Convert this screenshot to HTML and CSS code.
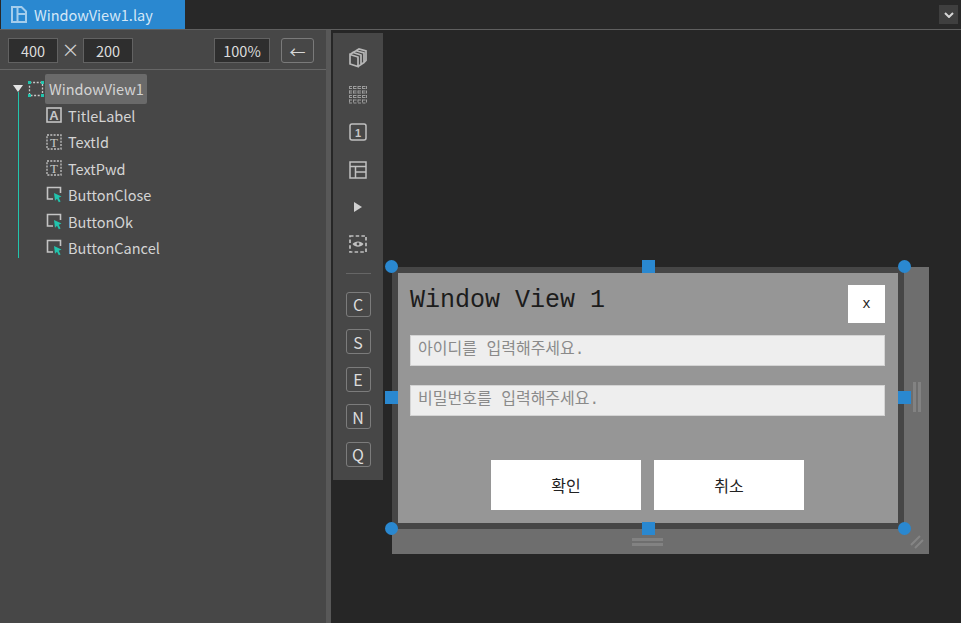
FILE: index.html
```html
<!DOCTYPE html>
<html lang="ko">
<head>
    <meta charset="UTF-8">
    <title>WindowView1.lay</title>
    <link rel="stylesheet" href="styles.css">
</head>
<body>

    <svg class="defs" width="0" height="0">
        <symbol id="icon-button" viewBox="0 0 16 17">
            <path d="M7 13H1.5V1.5H14.5V7" fill="none" stroke="#c4c4c4" stroke-width="1.6"/>
            <path d="M8 7L15.5 10.5L12.7 11.8L14.6 15.5L12.8 16.3L11 12.7L9 14.8Z" fill="#22c4ad"/>
        </symbol>
        <symbol id="icon-text" viewBox="0 0 16 16">
            <rect x="1" y="1" width="14" height="14" fill="none" stroke="#c4c4c4" stroke-width="1.3" stroke-dasharray="2 1.3"/>
            <text x="8" y="12.5" class="icon-glyph">T</text>
        </symbol>
    </svg>

    <header class="tabbar">
        <div class="tab">
            <svg class="tab-icon" width="16" height="17" viewBox="0 0 16 17">
                <path d="M1 1H10.5L15 5.5V16H1ZM6.5 1V16M6.5 8H15" fill="none" stroke="#a4cdec" stroke-width="2"/>
            </svg>
            <span>WindowView1.lay</span>
        </div>
        <button class="tab-menu">
            <svg width="10" height="6" viewBox="0 0 10 6"><path d="M1 1L5 5L9 1" fill="none" stroke="#d6d6d6" stroke-width="2"/></svg>
        </button>
    </header>

    <main class="workspace">
        <aside class="sidebar">
            <div class="size-bar">
                <span class="field">400</span>
                <span class="times">&times;</span>
                <span class="field">200</span>
                <span class="field zoom-field">100%</span>
                <button class="back-btn">&larr;</button>
            </div>

            <div class="tree">
                <div class="tree-row root-row">
                    <span class="caret"></span>
                    <svg class="root-icon" width="16" height="16" viewBox="0 0 16 16">
                        <rect x="1.5" y="1.5" width="13" height="13" fill="none" stroke="#c8c8c8" stroke-width="1.3" stroke-dasharray="2 1.6"/>
                        <path d="M0 0H3V3H0ZM13 0H16V3H13ZM0 13H3V16H0ZM13 13H16V16H13Z" fill="#22c4ad"/>
                    </svg>
                    <span class="selected">WindowView1</span>
                </div>
                <div class="tree-children">
                    <div class="tree-row">
                        <svg class="node-icon" width="16" height="16" viewBox="0 0 16 16">
                            <rect x="1" y="1" width="14" height="14" fill="none" stroke="#c4c4c4" stroke-width="1.6"/>
                            <text x="8" y="12.5" class="icon-glyph icon-bold">A</text>
                        </svg>
                        <span>TitleLabel</span>
                    </div>
                    <div class="tree-row">
                        <svg class="node-icon" width="16" height="16"><use href="#icon-text"/></svg>
                        <span>TextId</span>
                    </div>
                    <div class="tree-row">
                        <svg class="node-icon" width="16" height="16"><use href="#icon-text"/></svg>
                        <span>TextPwd</span>
                    </div>
                    <div class="tree-row">
                        <svg class="node-icon" width="16" height="17"><use href="#icon-button"/></svg>
                        <span>ButtonClose</span>
                    </div>
                    <div class="tree-row">
                        <svg class="node-icon" width="16" height="17"><use href="#icon-button"/></svg>
                        <span>ButtonOk</span>
                    </div>
                    <div class="tree-row">
                        <svg class="node-icon" width="16" height="17"><use href="#icon-button"/></svg>
                        <span>ButtonCancel</span>
                    </div>
                </div>
            </div>
        </aside>

        <div class="splitter"></div>

        <section class="canvas">
            <nav class="toolbox">
                <div class="tool">
                    <svg width="18" height="20" viewBox="0 0 18 20" fill="none" stroke="#b8b8b8" stroke-width="1.7">
                        <path d="M1 6.5L9 9V18.5L1 16ZM1 6.5L4 4.5L12 7V16.5L9 18.5M4 4.5L7 2.8L15 5V14.5L12 16.5M7 2.8L10 1L17 3V12.5L15 14.5"/>
                    </svg>
                </div>
                <div class="tool">
                    <svg width="18" height="18" viewBox="0 0 18 18" fill="none" stroke="#9c9c9c" stroke-dasharray="3 1.5">
                        <path d="M0 .5H18M0 2.5H18M0 5H18M0 7H18M0 9.5H18M0 11.5H18M0 14H18M0 17H18M.5 0V18M4.5 0V18M9 0V18M13.5 0V18M17.5 0V18"/>
                    </svg>
                </div>
                <div class="tool">
                    <svg width="18" height="18" viewBox="0 0 18 18">
                        <rect x="1" y="1" width="16" height="16" rx="2" fill="none" stroke="#c0c0c0" stroke-width="1.5"/>
                        <text x="9" y="13.5" class="icon-glyph icon-bold icon-one">1</text>
                    </svg>
                </div>
                <div class="tool">
                    <svg width="18" height="18" viewBox="0 0 18 18" fill="none" stroke="#c0c0c0" stroke-width="1.5">
                        <path d="M1 1H17V17H1ZM1 5.5H17M6.5 5.5V17M6.5 11H17"/>
                    </svg>
                </div>
                <div class="tool">
                    <svg width="10" height="12" viewBox="0 0 10 12"><path d="M1 1L9 6L1 11Z" fill="#d0d0d0"/></svg>
                </div>
                <div class="tool">
                    <svg width="18" height="18" viewBox="0 0 18 18">
                        <rect x="1" y="1" width="16" height="16" fill="none" stroke="#c0c0c0" stroke-width="1.7" stroke-dasharray="3.5 2.2"/>
                        <path d="M3.5 9C6 5.5 12 5.5 14.5 9C12 12.5 6 12.5 3.5 9Z" fill="#c0c0c0"/>
                        <circle cx="9" cy="9" r="1.4" fill="#474747"/>
                    </svg>
                </div>
                <div class="tool-sep"></div>
                <div class="letters">
                    <button class="letter-btn">C</button>
                    <button class="letter-btn">S</button>
                    <button class="letter-btn">E</button>
                    <button class="letter-btn">N</button>
                    <button class="letter-btn">Q</button>
                </div>
            </nav>

            <div class="stage">
                <div class="design-frame">
                    <div class="design-window">
                        <div class="win-head">
                            <div class="win-title">Window View 1</div>
                            <div class="win-close">x</div>
                        </div>
                        <div class="win-input">아이디를 입력해주세요.</div>
                        <div class="win-input">비밀번호를 입력해주세요.</div>
                        <div class="win-actions">
                            <div class="win-btn">확인</div>
                            <div class="win-btn">취소</div>
                        </div>
                    </div>
                </div>

                <span class="handle round nw"></span>
                <span class="handle round ne"></span>
                <span class="handle round sw"></span>
                <span class="handle round se"></span>
                <span class="handle top"></span>
                <span class="handle left"></span>
                <span class="handle right"></span>
                <span class="handle bottom"></span>

                <span class="grip grip-right"></span>
                <span class="grip grip-bottom"></span>
                <svg class="grip-corner" width="14" height="14" viewBox="0 0 14 14" stroke="#858585" stroke-width="2">
                    <path d="M1 10L10 1M5 13L13 5"/>
                </svg>
            </div>
        </section>
    </main>

</body>
</html>
```

FILE: styles.css
```css
* {
    box-sizing: border-box;
}

html, body {
    height: 100%;
}

body {
    margin: 0;
    display: flex;
    flex-direction: column;
    overflow: hidden;
    background-color: #262626;
    color: #d8d8d8;
    font-family: "Noto Sans CJK KR", "Noto Sans", sans-serif;
}

button {
    font-family: inherit;
    padding: 0;
}

.defs {
    position: absolute;
}

.icon-glyph {
    font-family: "Liberation Serif", serif;
    font-size: 13px;
    fill: #c8c8c8;
    text-anchor: middle;
}

.icon-bold {
    font-family: "Liberation Sans", sans-serif;
    font-weight: 700;
}

.icon-one {
    font-size: 11px;
}

/* top tab strip */
.tabbar {
    height: 30px;
    flex: none;
    display: flex;
    align-items: flex-start;
    justify-content: space-between;
    padding-left: 1px;
    padding-right: 3px;
    background-color: #282828;
    border-bottom: 1px solid #5f5f5f;
}

.tab {
    width: 184px;
    height: 29px;
    display: flex;
    align-items: center;
    gap: 7px;
    padding-left: 10px;
    background-color: #2a88d0;
    color: #d4e7f7;
    font-size: 14.5px;
}

.tab-menu {
    width: 19px;
    height: 19px;
    margin-top: 5px;
    display: flex;
    align-items: center;
    justify-content: center;
    border: none;
    background-color: #3f3f3f;
}

.workspace {
    flex: 1;
    display: flex;
    min-height: 0;
}

/* left panel */
.sidebar {
    width: 326px;
    flex: none;
    background-color: #474747;
}

.size-bar {
    height: 40px;
    display: flex;
    align-items: center;
    padding: 2px 12px 0 8px;
    border-bottom: 1px solid #666;
    font-size: 14.5px;
}

.field {
    width: 50px;
    height: 25px;
    display: flex;
    align-items: center;
    justify-content: center;
    background-color: #2e2e2e;
    border: 1px solid #626262;
    color: #dcdcdc;
}

.times {
    width: 25px;
    text-align: center;
    font-size: 18px;
    line-height: 20px;
    margin-top: -4px;
    color: #d0d0d0;
}

.zoom-field {
    width: 56px;
    margin-left: 81px;
}

.back-btn {
    width: 33px;
    height: 25px;
    margin-left: 11px;
    border: 1px solid #7a7a7a;
    border-radius: 3px;
    background-color: #474747;
    color: #d8d8d8;
    font-size: 16px;
    line-height: 20px;
}

.tree {
    padding-top: 5.5px;
    font-size: 14.5px;
    color: #d4d4d4;
}

.tree-row {
    height: 26.5px;
    display: flex;
    align-items: center;
    padding-left: 46px;
}

.root-row {
    padding-left: 13px;
}

.caret {
    width: 0;
    height: 0;
    border-left: 5px solid transparent;
    border-right: 5px solid transparent;
    border-top: 7px solid #e4e4e4;
    margin-right: 5px;
}

.selected {
    height: 30px;
    flex: none;
    display: flex;
    align-items: center;
    margin-left: 1px;
    padding: 0 3px 0 4px;
    background-color: #6a6a6a;
    border-radius: 2px;
}

.tree-children {
    position: relative;
}

.tree-children::before {
    content: "";
    position: absolute;
    left: 18px;
    top: -10px;
    bottom: 3px;
    width: 1px;
    background-color: #22c4ad;
}

.node-icon {
    flex: none;
    margin-right: 6px;
}

.splitter {
    width: 5px;
    flex: none;
    background-color: #585858;
}

/* canvas side */
.canvas {
    flex: 1;
    position: relative;
    background-color: #262626;
}

.toolbox {
    width: 50px;
    height: 447px;
    margin: 3px 0 0 2px;
    padding-top: 6.4px;
    display: flex;
    flex-direction: column;
    align-items: center;
    background-color: #474747;
}

.tool {
    height: 37.2px;
    flex: none;
    display: flex;
    align-items: center;
    justify-content: center;
}

.tool-sep {
    width: 25px;
    height: 1px;
    flex: none;
    margin: 10px 0 18px;
    background-color: #666;
}

.letters {
    display: flex;
    flex-direction: column;
    gap: 12.5px;
}

.letter-btn {
    width: 25px;
    height: 25px;
    display: flex;
    align-items: center;
    justify-content: center;
    border: 1px solid #7c7c7c;
    border-radius: 3px;
    background-color: transparent;
    color: #dcdcdc;
    font-size: 16px;
}

.stage {
    position: absolute;
    left: 61px;
    top: 237px;
    width: 537px;
    height: 287px;
    background-color: #6e6e6e;
}

.design-frame {
    width: 512px;
    height: 262px;
    border: 6px solid #464646;
}

.design-window {
    height: 100%;
    display: flex;
    flex-direction: column;
    padding: 12px 13px 13px 12px;
    background-color: #969696;
    color: #1c1c1c;
    font-family: "Liberation Mono", "Noto Sans CJK KR", monospace;
}

.win-head {
    height: 38px;
    display: flex;
    justify-content: space-between;
    margin-bottom: 12px;
}

.win-title {
    padding-top: 2px;
    font-size: 25px;
    line-height: 28px;
}

.win-close {
    width: 37px;
    height: 38px;
    display: flex;
    align-items: center;
    justify-content: center;
    background-color: #fff;
    color: #222;
    font-size: 14px;
}

.win-input {
    height: 31px;
    flex: none;
    margin-bottom: 19px;
    padding-left: 7px;
    background-color: #eee;
    border: 1px solid #d4d4d4;
    color: #8a8a8a;
    font-size: 16px;
    line-height: 28px;
}

.win-actions {
    display: flex;
    gap: 13px;
    margin-top: 25px;
    padding-left: 81px;
}

.win-btn {
    width: 150px;
    height: 50px;
    display: flex;
    align-items: center;
    justify-content: center;
    background-color: #fff;
    color: #222;
    font-size: 16px;
}

/* selection handles sit on the frame edge */
.handle {
    position: absolute;
    width: 13px;
    height: 13px;
    background-color: #2a88d0;
}

.round {
    border-radius: 50%;
}

.nw { left: -7px; top: -7px; }
.ne { left: 506px; top: -7px; }
.sw { left: -7px; top: 255px; }
.se { left: 506px; top: 255px; }
.top { left: 250px; top: -7px; }
.left { left: -7px; top: 124px; }
.right { left: 506px; top: 124px; }
.bottom { left: 250px; top: 255px; }

.grip {
    position: absolute;
}

.grip-right {
    left: 521px;
    top: 115px;
    width: 8px;
    height: 30px;
    border-left: 3px solid #828282;
    border-right: 3px solid #828282;
}

.grip-bottom {
    left: 240px;
    top: 271px;
    width: 31px;
    height: 8px;
    border-top: 3px solid #828282;
    border-bottom: 3px solid #828282;
}

.grip-corner {
    position: absolute;
    left: 518px;
    top: 268px;
}
```
